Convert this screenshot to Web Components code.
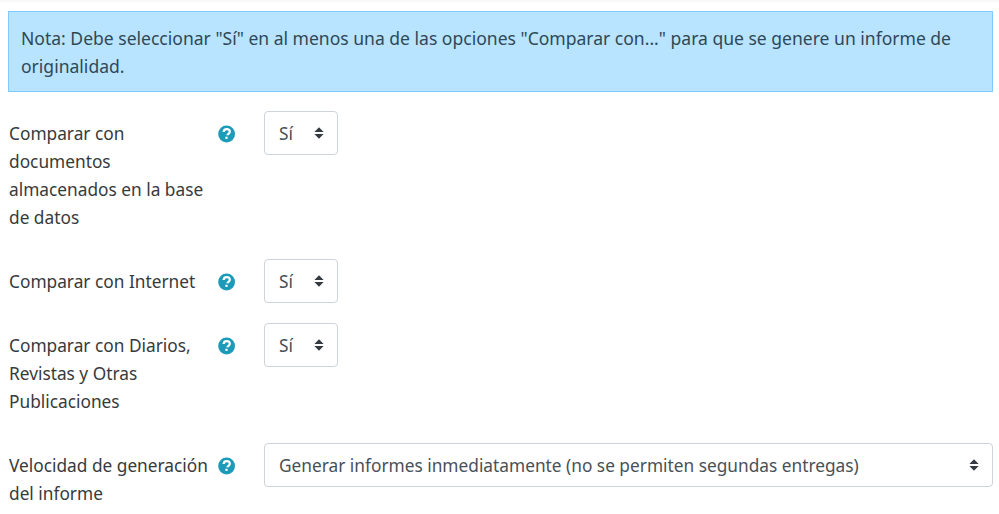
<!DOCTYPE html>
<html lang="es">
<head>
<meta charset="utf-8">
<title>Informe de originalidad</title>
<style>
  html, body { margin: 0; background: #fff; }
  body { font-family: "Noto Sans", "Open Sans", sans-serif; font-size: 17.3px; line-height: 28px; color: #373a3c; overflow: hidden; }
</style>
</head>
<body>
<settings-page>
  <info-alert>Nota: Debe seleccionar "Sí" en al menos una de las opciones "Comparar con..." para que se genere un informe de originalidad.</info-alert>
  <form-row label="Comparar con documentos almacenados en la base de datos" value="Sí"></form-row>
  <form-row label="Comparar con Internet" value="Sí"></form-row>
  <form-row label="Comparar con Diarios, Revistas y Otras Publicaciones" value="Sí"></form-row>
  <form-row label="Velocidad de generación del informe" value="Generar informes inmediatamente (no se permiten segundas entregas)" wide></form-row>
</settings-page>
<script>
class SettingsPage extends HTMLElement {
  constructor() {
    super();
    this.attachShadow({ mode: 'open' }).innerHTML = `
      <style>
        :host { display: block; border-top: 2px solid #f8f9fa; padding: 9px 6px 0 8px; }
      </style>
      <slot></slot>`;
  }
}

class InfoAlert extends HTMLElement {
  constructor() {
    super();
    this.attachShadow({ mode: 'open' }).innerHTML = `
      <style>
        :host {
          display: block;
          box-sizing: border-box;
          height: 81px;
          margin-bottom: 19px;
          padding: 12px 12px;
          background: #b8e4ff;
          border: 1px solid #7fcbff;
          color: #2f4858;
          font-size: 17.55px;
        }
      </style>
      <slot></slot>`;
  }
}

class HelpIcon extends HTMLElement {
  constructor() {
    super();
    this.attachShadow({ mode: 'open' }).innerHTML = `
      <style>
        :host { display: block; width: 18px; height: 18px; }
        svg { display: block; width: 18px; height: 18px; }
      </style>
      <svg viewBox="0 0 18 18">
        <circle cx="8.6" cy="9" r="8.4" fill="#1b9bb8"/>
        <path d="M5.6 7C5.7 5.2 7 4.2 8.7 4.2c1.8 0 3.1 1.1 3.1 2.5 0 1.2-.7 1.8-1.5 2.3-.7.4-.8.7-.8 1.3" fill="none" stroke="#fff" stroke-width="2.2"/>
        <rect x="7.4" y="11.7" width="2.2" height="2.2" fill="#fff"/>
      </svg>`;
  }
}

class SelectBox extends HTMLElement {
  constructor() {
    super();
    this.attachShadow({ mode: 'open' }).innerHTML = `
      <style>
        :host {
          display: flex;
          align-items: center;
          justify-content: space-between;
          box-sizing: border-box;
          height: 44px;
          min-width: 74px;
          padding: 0 13px 0 14px;
          background: #fff;
          border: 1px solid #ced4da;
          border-radius: 4px;
          color: #495057;
          white-space: nowrap;
        }
        span { padding-top: 1px; }
        svg { display: block; width: 10px; height: 14px; flex: none; }
      </style>
      <span><slot></slot></span>
      <svg viewBox="0 0 10 14"><path d="M5 1.2l4.6 4.7H.4zM5 12.8L.4 8.1h9.2z" fill="#343a40"/></svg>`;
  }
}

class FormRow extends HTMLElement {
  constructor() {
    super();
    this.attachShadow({ mode: 'open' }).innerHTML = `
      <style>
        :host {
          display: grid;
          grid-template-columns: 209px 46px 1fr;
          margin-bottom: 20px;
          padding-left: 1px;
        }
        .label { padding: 9px 0 7px; }
        .help { padding-top: 14px; }
        .control { display: flex; align-items: flex-start; }
        :host([wide]) select-box { flex: 1; }
      </style>
      <div class="label"></div>
      <div class="help"><help-icon></help-icon></div>
      <div class="control"><select-box></select-box></div>`;
  }
  connectedCallback() {
    this.shadowRoot.querySelector('.label').textContent = this.getAttribute('label');
    this.shadowRoot.querySelector('select-box').textContent = this.getAttribute('value');
  }
}

customElements.define('settings-page', SettingsPage);
customElements.define('info-alert', InfoAlert);
customElements.define('help-icon', HelpIcon);
customElements.define('select-box', SelectBox);
customElements.define('form-row', FormRow);
</script>
</body>
</html>
